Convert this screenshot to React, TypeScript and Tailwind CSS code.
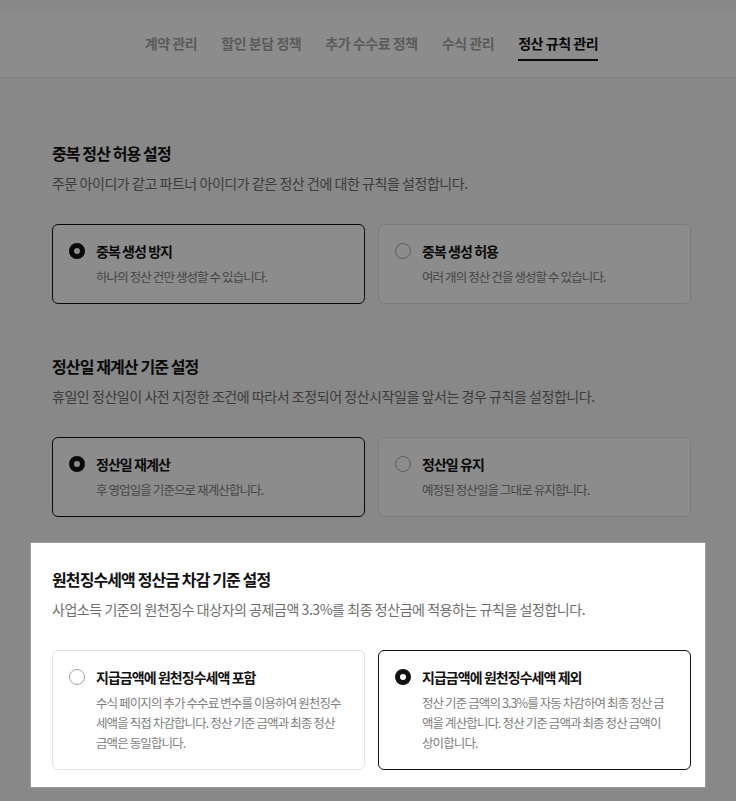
import { useState } from 'react';

type Option = { id: string; title: string; lines: string[] };

type Section = {
  id: string;
  title: string;
  desc: string;
  options: Option[];
  initial: string;
};

const TABS = ['계약 관리', '할인 분담 정책', '추가 수수료 정책', '수식 관리', '정산 규칙 관리'];

const SECTIONS: Section[] = [
  {
    id: 'dup',
    title: '중복 정산 허용 설정',
    desc: '주문 아이디가 같고 파트너 아이디가 같은 정산 건에 대한 규칙을 설정합니다.',
    initial: 'prevent',
    options: [
      { id: 'prevent', title: '중복 생성 방지', lines: ['하나의 정산 건만 생성할 수 있습니다.'] },
      { id: 'allow', title: '중복 생성 허용', lines: ['여러 개의 정산 건을 생성할 수 있습니다.'] },
    ],
  },
  {
    id: 'recalc',
    title: '정산일 재계산 기준 설정',
    desc: '휴일인 정산일이 사전 지정한 조건에 따라서 조정되어 정산시작일을 앞서는 경우 규칙을 설정합니다.',
    initial: 'recalc',
    options: [
      { id: 'recalc', title: '정산일 재계산', lines: ['후 영업일을 기준으로 재계산합니다.'] },
      { id: 'keep', title: '정산일 유지', lines: ['예정된 정산일을 그대로 유지합니다.'] },
    ],
  },
  {
    id: 'tax',
    title: '원천징수세액 정산금 차감 기준 설정',
    desc: '사업소득 기준의 원천징수 대상자의 공제금액 3.3%를 최종 정산금에 적용하는 규칙을 설정합니다.',
    initial: 'exclude',
    options: [
      {
        id: 'include',
        title: '지급금액에 원천징수세액 포함',
        lines: ['수식 페이지의 추가 수수료 변수를 이용하여 원천징수', '세액을 직접 차감합니다. 정산 기준 금액과 최종 정산', '금액은 동일합니다.'],
      },
      {
        id: 'exclude',
        title: '지급금액에 원천징수세액 제외',
        lines: ['정산 기준 금액의 3.3%를 자동 차감하여 최종 정산 금', '액을 계산합니다. 정산 기준 금액과 최종 정산 금액이', '상이합니다.'],
      },
    ],
  },
];

function RuleSection({ s }: { s: Section }) {
  const [value, setValue] = useState(s.initial);
  return (
    <section>
      <h2 className="text-[16px] leading-6 font-bold text-[#111] tracking-[-0.9px]">{s.title}</h2>
      <p className="mt-2 text-[14px] leading-5 text-[#6e6e6e] tracking-[-0.45px]">{s.desc}</p>
      <div className="mt-[31px] grid grid-cols-2 gap-[13px]">
        {s.options.map((o) => {
          const on = value === o.id;
          return (
            <button
              key={o.id}
              onClick={() => setValue(o.id)}
              className={
                'flex items-start gap-[11px] rounded-[6px] border bg-white px-[16px] py-[16px] text-left ' +
                (on ? 'border-[#111]' : 'border-[#e2e2e2]')
              }
            >
              <span
                className={
                  'mt-[2px] h-4 w-4 shrink-0 rounded-full ' +
                  (on ? 'border-[5px] border-[#111] bg-white' : 'border border-[#a3a7b3] bg-white')
                }
              />
              <span className="min-w-0">
                <span className="block text-[14px] leading-5 font-semibold text-[#111] tracking-[-0.95px]">{o.title}</span>
                <span className="mt-[6px] block text-[12.5px] leading-5 text-[#7e7e7e] tracking-[-0.9px]">
                  {o.lines.map((l, i) => (
                    <span key={i} className="block whitespace-nowrap">
                      {l}
                    </span>
                  ))}
                </span>
              </span>
            </button>
          );
        })}
      </div>
    </section>
  );
}

export default function App() {
  const [tab, setTab] = useState(4);
  return (
    <div className="relative min-h-screen bg-[#f7f7f7] pb-10" style={{ fontFamily: '"Noto Sans CJK KR", "Noto Sans", sans-serif' }}>
      <div className="h-3" />
      <header className="flex h-[66px] justify-center gap-6 border-b border-[#ebebeb] bg-white pt-[21px] pl-[7px]">
        {TABS.map((t, i) => (
          <button
            key={t}
            onClick={() => setTab(i)}
            className={
              'h-7 border-b-2 pb-[6px] text-[14px] leading-5 font-semibold tracking-[-0.45px] ' +
              (i === tab ? 'border-[#111] text-[#111]' : 'border-transparent text-[#a6a6a6]')
            }
          >
            {t}
          </button>
        ))}
      </header>

      <main className="pl-[52px] pr-[45px] pt-[63px]">
        <RuleSection s={SECTIONS[0]} />
        <div className="mt-[50px]">
          <RuleSection s={SECTIONS[1]} />
        </div>
        <div className="relative z-20 mt-[26px] -ml-[21px] -mr-[14px] bg-white pl-[21px] pr-[14px] pt-[24px] pb-[17px] ring-1 ring-[#9c9ca6]">
          <RuleSection s={SECTIONS[2]} />
        </div>
      </main>

      <div className="absolute inset-0 z-10 bg-black/45" />
    </div>
  );
}
